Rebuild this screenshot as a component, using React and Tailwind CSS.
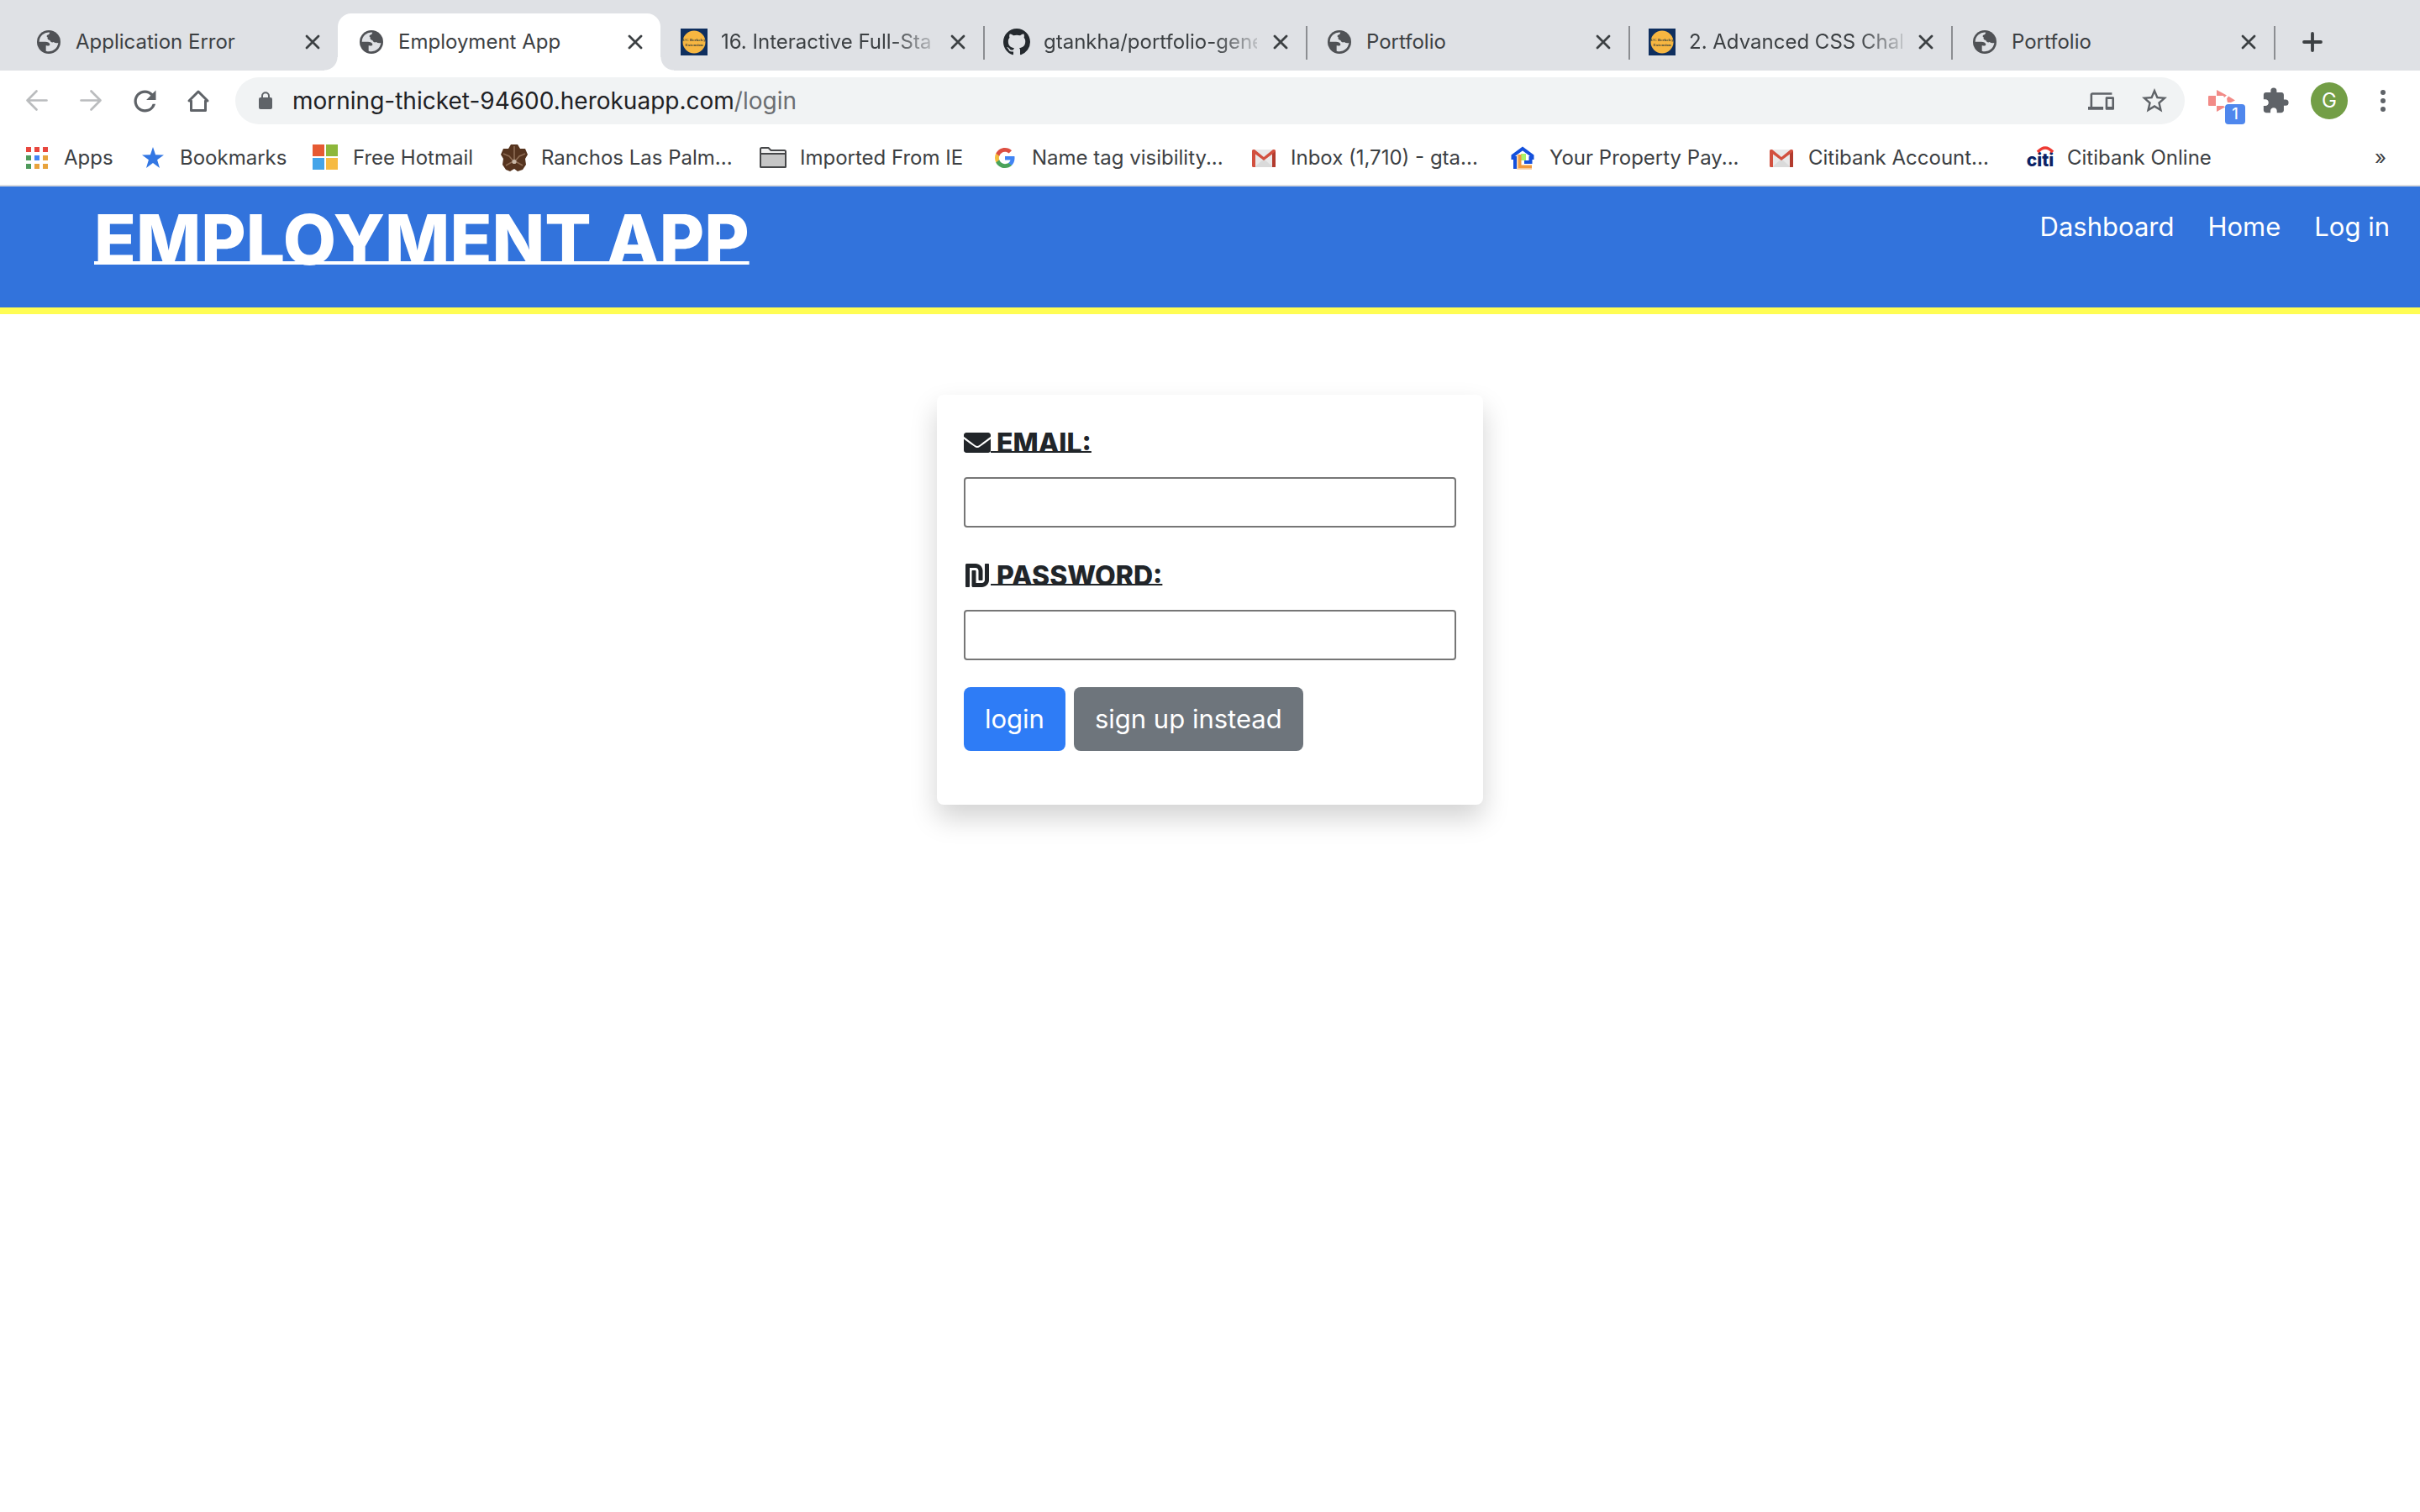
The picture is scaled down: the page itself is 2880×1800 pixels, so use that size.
import React from "react";
import { MdDevices, MdStarBorder, MdExtension, MdRefresh } from "react-icons/md";
import { FaEnvelope, FaShekelSign } from "react-icons/fa";

/* ---------- icons ---------- */

function GlobeIcon() {
  return (
    <svg viewBox="-6 -6 96 96" className="size-8" aria-hidden="true">
      <circle cx="42" cy="42" r="42" fill="#505256" />
      <path
        d="M46 8A34 34 0 0 0 8 41H30C38 41 45 44 46 50C47 55 40 56 32 55V74A34 34 0 0 0 76 45C70 47 64 46 59 42C54 45 48 42 46 36C40 35 36 31 38 25C33 24 34 16 42 16Z"
        fill="#dfe1e5"
      />
    </svg>
  );
}

function BerkeleyIcon() {
  return (
    <svg viewBox="0 0 32 32" className="size-8" aria-hidden="true">
      <rect width="32" height="32" fill="#0f2f5f" />
      <circle cx="16" cy="16" r="13.5" fill="#f6b641" />
      <text x="16" y="15" textAnchor="middle" fontFamily="Liberation Serif, serif" fontWeight="700" fontSize="5" fill="#3b3f3a">UC Berkeley</text>
      <text x="16" y="21" textAnchor="middle" fontFamily="Liberation Serif, serif" fontWeight="700" fontSize="5" fill="#3b3f3a">Extension</text>
    </svg>
  );
}

function GithubIcon() {
  return (
    <svg viewBox="0 0 16 16" className="size-8" fill="#24292e" aria-hidden="true">
      <path d="M8 0C3.58 0 0 3.58 0 8c0 3.54 2.29 6.53 5.47 7.59.4.07.55-.17.55-.38 0-.19-.01-.82-.01-1.49-2.01.37-2.53-.49-2.69-.94-.09-.23-.48-.94-.82-1.13-.28-.15-.68-.52-.01-.53.63-.01 1.08.58 1.23.82.72 1.21 1.87.87 2.33.66.07-.52.28-.87.51-1.07-1.78-.2-3.64-.89-3.64-3.95 0-.87.31-1.59.82-2.15-.08-.2-.36-1.02.08-2.12 0 0 .67-.21 2.2.82.64-.18 1.32-.27 2-.27.68 0 1.36.09 2 .27 1.53-1.04 2.2-.82 2.2-.82.44 1.1.16 1.92.08 2.12.51.56.82 1.27.82 2.15 0 3.07-1.87 3.75-3.65 3.95.29.25.54.73.54 1.48 0 1.07-.01 1.93-.01 2.2 0 .21.15.46.55.38A8.013 8.013 0 0 0 16 8c0-4.42-3.58-8-8-8z" />
    </svg>
  );
}

function CloseIcon() {
  return (
    <svg viewBox="0 0 24 24" className="size-6" stroke="#3c4043" strokeWidth="2.8" strokeLinecap="round" aria-hidden="true">
      <path d="M5 5L19 19M19 5L5 19" />
    </svg>
  );
}

function PlusIcon() {
  return (
    <svg viewBox="0 0 32 32" className="size-8" stroke="#3c4043" strokeWidth="3.8" strokeLinecap="round" aria-hidden="true">
      <path d="M16 6V26M6 16H26" />
    </svg>
  );
}

function ArrowIcon({ flip }) {
  return (
    <svg
      viewBox="0 0 32 32"
      className={flip ? "size-8 -scale-x-100" : "size-8"}
      fill="none"
      stroke="#babcbe"
      strokeWidth="2.7"
      strokeLinecap="round"
      strokeLinejoin="round"
      aria-hidden="true"
    >
      <path d="M27.5 15.5H4.5M15.5 4.5L4.5 15.5L15.5 26.5" />
    </svg>
  );
}

function HomeIcon() {
  return (
    <svg viewBox="0 0 32 32" className="size-8" fill="none" stroke="#5f6368" strokeWidth="3" strokeLinejoin="round" aria-hidden="true">
      <path d="M16 5L5 16H7.5V27.5H24.5V16H27Z" />
    </svg>
  );
}

function LockIcon() {
  return (
    <svg viewBox="0 0 16 22" className="h-[22px] w-4" aria-hidden="true">
      <rect y="7" width="16" height="14" rx="2" fill="#5f6368" />
      <path d="M4 8V5.2a4 4 0 0 1 8 0V8" fill="none" stroke="#5f6368" strokeWidth="2" />
    </svg>
  );
}

function DotsIcon() {
  return (
    <svg viewBox="0 0 32 32" className="size-8" fill="#5f6368" aria-hidden="true">
      <circle cx="16" cy="6" r="3" />
      <circle cx="16" cy="16" r="3" />
      <circle cx="16" cy="26" r="3" />
    </svg>
  );
}

function RecorderIcon() {
  return (
    <svg viewBox="0 0 32 26" className="h-[26px] w-8" fill="#f28b87" aria-hidden="true">
      <path d="M0 8a1 1 0 0 1 1-1H9V19H1a1 1 0 0 1-1-1Z" />
      <path d="M10 0L22 6.5L19 9L18 7H10Z" />
      <path d="M24 7.5L32 12.5L27 15H23L22 10.5Z" />
      <path d="M10 19H18L20 20.5L10 26Z" />
    </svg>
  );
}

function AppsIcon() {
  const cells = ["#e8473e", "#e8473e", "#e8473e", "#4f9a5b", "#4285f4", "#e8a33d", "#4f9a5b", "#e8a33d", "#e8a33d"];
  return (
    <svg viewBox="0 0 32 32" className="size-8" aria-hidden="true">
      {cells.map((c, i) => (
        <rect key={i} x={3 + (i % 3) * 10} y={3 + Math.floor(i / 3) * 10} width="6" height="6" fill={c} />
      ))}
    </svg>
  );
}

function StarIcon() {
  return (
    <svg viewBox="0 0 32 32" className="size-8" fill="#3377e3" aria-hidden="true">
      <path d="M16 3L19.1 12.2L29 12.4L21.1 18.2L24 28L16 22.1L8 28L10.9 18.2L3 12.4L12.9 12.2Z" />
    </svg>
  );
}

function MicrosoftIcon() {
  return (
    <svg viewBox="0 0 32 32" className="size-8" aria-hidden="true">
      <rect x="0" y="0" width="14" height="14" fill="#e65a33" />
      <rect x="16" y="0" width="14" height="14" fill="#8db73a" />
      <rect x="0" y="16" width="14" height="14" fill="#44a4e9" />
      <rect x="16" y="16" width="14" height="14" fill="#f6ba42" />
    </svg>
  );
}

function RanchosIcon() {
  return (
    <svg viewBox="0 0 32 32" className="size-8" aria-hidden="true">
      <path d="M12 0H20L23 5H29L32 12L29 17L30 24L26 30L20 32L16 29L11 32L6 30L2 24L3 17L0 12L3 5H9Z" fill="#56341f" />
      <path d="M16 2V20M3 11L10 14L16 21L22 14L29 11M6 25L13 21H19L26 25" fill="none" stroke="#8d6c54" strokeWidth="1.6" />
      <circle cx="16" cy="20.5" r="2.6" fill="#c9b8a8" />
    </svg>
  );
}

function FolderIcon() {
  return (
    <svg viewBox="0 0 32 32" className="size-8" stroke="#454648" strokeWidth="2" strokeLinejoin="round" aria-hidden="true">
      <path d="M1 26V5.5Q1 4 2.5 4H10.5L13.5 7H29.5Q31 7 31 8.5V26Q31 27 30 27H2Q1 27 1 26Z" fill="#f1f1f1" />
      <path d="M1 11H31V26Q31 27 30 27H2Q1 27 1 26Z" fill="#c6c6c6" />
    </svg>
  );
}

function GoogleIcon() {
  return (
    <svg viewBox="0 0 32 32" className="size-8" aria-hidden="true">
      <g transform="translate(4 4)">
        <path d="M23.52 12.27c0-.79-.07-1.54-.19-2.27H12v4.51h6.47c-.29 1.48-1.14 2.73-2.4 3.58v3h3.86c2.26-2.09 3.59-5.17 3.59-8.82z" fill="#4285f4" />
        <path d="M12 24c3.24 0 5.95-1.08 7.93-2.91l-3.86-3c-1.08.72-2.45 1.16-4.07 1.16-3.13 0-5.78-2.11-6.73-4.96H1.29v3.09C3.26 21.3 7.31 24 12 24z" fill="#4aa35a" />
        <path d="M5.27 14.29c-.25-.72-.38-1.49-.38-2.29s.14-1.57.38-2.29V6.62H1.29C.47 8.24 0 10.06 0 12s.47 3.76 1.29 5.38l3.98-3.09z" fill="#f5bd3d" />
        <path d="M12 4.75c1.77 0 3.35.61 4.6 1.8l3.42-3.42C17.95 1.19 15.24 0 12 0 7.31 0 3.26 2.7 1.29 6.62l3.98 3.09C6.22 6.86 8.87 4.75 12 4.75z" fill="#dd4f42" />
      </g>
    </svg>
  );
}

function GmailIcon() {
  return (
    <svg viewBox="0 0 32 32" className="size-8" aria-hidden="true">
      <path d="M3 6H29V27H3Z" fill="#e9e9e9" />
      <path d="M5 27L16 17L27 27Z" fill="#dadada" />
      <path d="M2 7.5A1.5 1.5 0 0 1 3.5 6H5L16 15L27 6H28.5A1.5 1.5 0 0 1 30 7.5V27H26V11.5L16 19L6 11.5V27H3.5A1.5 1.5 0 0 1 2 25.5Z" fill="#d2503f" />
      <path d="M26 11.5L30 8V25.5A1.5 1.5 0 0 1 28.5 27H26Z" fill="#b23b2e" />
    </svg>
  );
}

function PropertyIcon() {
  return (
    <svg viewBox="0 0 32 32" className="size-8" fill="none" aria-hidden="true">
      <path d="M14 11H20V19H14Z" fill="#a9f36a" />
      <path d="M7 29V16H4.5V13.5L16 5L27.5 13.5V16H25.5V21H18" stroke="#1450dc" strokeWidth="4" />
      <path d="M12.5 12V26.5H27" stroke="#f19a3e" strokeWidth="4" />
      <path d="M10 12V29H27" stroke="#f8c795" strokeWidth="1.5" />
    </svg>
  );
}

function CitiIcon() {
  return (
    <svg viewBox="0 0 32 32" className="size-8 overflow-visible" aria-hidden="true">
      <text x="16" y="26" textAnchor="middle" fontFamily="Inter, sans-serif" fontWeight="800" fontSize="21" fill="#0b2265">citi</text>
      <path d="M13 9Q22 -1 31 9" fill="none" stroke="#ee3a33" strokeWidth="3.5" />
    </svg>
  );
}

/* ---------- browser chrome ---------- */

const tabs = [
  { title: "Application Error", Icon: GlobeIcon },
  { title: "Employment App", Icon: GlobeIcon, active: true },
  { title: "16. Interactive Full-Sta", Icon: BerkeleyIcon, divider: true, fade: true },
  { title: "gtankha/portfolio-gene", Icon: GithubIcon, divider: true, fade: true },
  { title: "Portfolio", Icon: GlobeIcon, divider: true },
  { title: "2. Advanced CSS Chall", Icon: BerkeleyIcon, divider: true, fade: true },
  { title: "Portfolio", Icon: GlobeIcon, divider: true },
];

function Tab({ title, Icon, active, divider, fade }) {
  return (
    <div
      role="tab"
      aria-selected={!!active}
      className={
        "relative flex h-full min-w-0 flex-[0_1_384px] items-center gap-4 pl-6 pr-[18px] text-2xl text-[#3c4043] " +
        (active ? "rounded-t-2xl bg-white" : "")
      }
    >
      {active && (
        <>
          <span className="absolute -left-4 bottom-0 size-4 bg-[radial-gradient(circle_at_0_0,transparent_15px,#fff_16px)]" />
          <span className="absolute -right-4 bottom-0 size-4 bg-[radial-gradient(circle_at_100%_0,transparent_15px,#fff_16px)]" />
        </>
      )}
      <span className="shrink-0">
        <Icon />
      </span>
      <span
        className={
          "min-w-0 flex-1 whitespace-nowrap " +
          (fade ? "[mask-image:linear-gradient(to_right,#000_80%,#0003)]" : "")
        }
      >
        {title}
      </span>
      <button type="button" aria-label={"Close " + title} className="shrink-0">
        <CloseIcon />
      </button>
      {divider && <span className="absolute -right-0.5 top-[15px] h-10 w-0.5 bg-[#8c8e92]" />}
    </div>
  );
}

function TabStrip() {
  return (
    <div className="flex h-[84px] items-stretch bg-[#dfe1e5] pl-[18px] pt-4">
      <div role="tablist" className="flex min-w-0 flex-[0_1_2688px]">
        {tabs.map((t, i) => (
          <Tab key={i} {...t} />
        ))}
      </div>
      <button type="button" aria-label="New tab" className="ml-[30px] shrink-0">
        <PlusIcon />
      </button>
    </div>
  );
}

function ToolButton({ label, children }) {
  return (
    <button type="button" aria-label={label} className="flex h-14 w-16 shrink-0 items-center justify-center text-[#5f6368]">
      {children}
    </button>
  );
}

function Toolbar() {
  return (
    <div className="flex h-[72px] items-center bg-white px-3">
      <ToolButton label="Back"><ArrowIcon /></ToolButton>
      <ToolButton label="Forward"><ArrowIcon flip /></ToolButton>
      <ToolButton label="Reload"><MdRefresh size={39} /></ToolButton>
      <ToolButton label="Home"><HomeIcon /></ToolButton>
      <div className="mx-3 flex h-14 min-w-0 flex-1 items-center rounded-full bg-[#f1f3f4] pl-7 pr-1">
        <LockIcon />
        <p className="ml-6 min-w-0 flex-1 truncate text-[28px] leading-9 text-[#202124]">
          morning-thicket-94600.herokuapp.com<span className="text-[#6b6e72]">/login</span>
        </p>
        <ToolButton label="Send to your devices"><MdDevices size={31} /></ToolButton>
        <ToolButton label="Bookmark this page"><MdStarBorder size={36} /></ToolButton>
      </div>
      <button type="button" aria-label="Screen recorder" className="relative flex h-14 w-16 shrink-0 items-center justify-center">
        <RecorderIcon />
        <span className="absolute bottom-0 right-1 flex size-6 items-center justify-center rounded bg-[#4f87ed] text-lg leading-6 font-medium text-white">1</span>
      </button>
      <ToolButton label="Extensions"><MdExtension size={34} /></ToolButton>
      <button type="button" aria-label="Profile" className="flex h-14 w-16 shrink-0 items-center justify-center">
        <span className="flex size-11 items-center justify-center rounded-full bg-[#739e46] text-2xl leading-6 text-white">G</span>
      </button>
      <ToolButton label="Menu"><DotsIcon /></ToolButton>
    </div>
  );
}

const bookmarks = [
  { title: "Apps", Icon: AppsIcon, width: "w-[138px]" },
  { title: "Bookmarks", Icon: StarIcon, width: "w-[206px]" },
  { title: "Free Hotmail", Icon: MicrosoftIcon, width: "w-[224px]" },
  { title: "Ranchos Las Palm...", Icon: RanchosIcon, width: "w-[308px]" },
  { title: "Imported From IE", Icon: FolderIcon, width: "w-[276px]" },
  { title: "Name tag visibility...", Icon: GoogleIcon, width: "w-[308px]" },
  { title: "Inbox (1,710) - gta...", Icon: GmailIcon, width: "w-[308px]" },
  { title: "Your Property Pay...", Icon: PropertyIcon, width: "w-[308px]" },
  { title: "Citibank Account...", Icon: GmailIcon, width: "w-[308px]" },
  { title: "Citibank Online", Icon: CitiIcon, width: "w-[276px]" },
];

function BookmarksBar() {
  return (
    <nav aria-label="Bookmarks" className="flex h-[66px] items-center border-b-2 border-[#dadce0] bg-white pl-7 pr-10 text-2xl text-[#3c4043]">
      {bookmarks.map(({ title, Icon, width }) => (
        <a key={title} href="#" className={"flex items-center gap-4 overflow-hidden whitespace-nowrap " + width}>
          <span className="shrink-0">
            <Icon />
          </span>
          {title}
        </a>
      ))}
      <button type="button" aria-label="More bookmarks" className="ml-auto">»</button>
    </nav>
  );
}

/* ---------- page ---------- */

function SiteHeader() {
  return (
    <header className="flex items-start justify-between border-b-8 border-[#fffd54] bg-[#3273dc] pt-4 pb-8 pl-28 pr-9 text-white">
      <h1 className="text-[82px] leading-[96px] font-extrabold">
        <a href="#" className="underline decoration-4 underline-offset-[-4px] [text-decoration-skip-ink:none]">EMPLOYMENT APP</a>
      </h1>
      <nav className="flex gap-10 pt-2 text-[31px] leading-[48px]">
        <a href="#">Dashboard</a>
        <a href="#">Home</a>
        <a href="#">Log in</a>
      </nav>
    </header>
  );
}

function Field({ id, type, label, Icon }) {
  return (
    <div className="mb-8">
      <label
        htmlFor={id}
        className="block text-[32px] leading-[52px] font-extrabold underline decoration-2 underline-offset-[-2px] [text-decoration-skip-ink:none]"
      >
        <Icon className="inline align-[-4px]" size={32} /> {label}
      </label>
      <input id={id} type={type} className="mt-3.5 block h-[60px] w-full rounded border-2 border-[#767676] bg-white px-2 text-[31px]" />
    </div>
  );
}

function LoginCard() {
  return (
    <form
      onSubmit={(e) => e.preventDefault()}
      className="w-[650px] max-w-full rounded-lg bg-white px-8 pt-8 pb-16 text-[#212529] shadow-[0_16px_32px_rgba(0,0,0,0.175)]"
    >
      <Field id="email" type="email" label="EMAIL:" Icon={FaEnvelope} />
      <Field id="password" type="password" label="PASSWORD:" Icon={FaShekelSign} />
      <div className="flex gap-2.5 text-[31px] leading-[48px] text-white">
        <button type="submit" className="rounded-lg bg-[#2e7cf6] px-[25px] py-3.5">login</button>
        <button type="button" className="rounded-lg bg-[#6e757c] px-[25px] py-3.5">sign up instead</button>
      </div>
    </form>
  );
}

export default function App() {
  return (
    <div className="min-h-screen bg-white font-['Inter',sans-serif]">
      <TabStrip />
      <Toolbar />
      <BookmarksBar />
      <SiteHeader />
      <main className="flex justify-center pt-24">
        <LoginCard />
      </main>
    </div>
  );
}
